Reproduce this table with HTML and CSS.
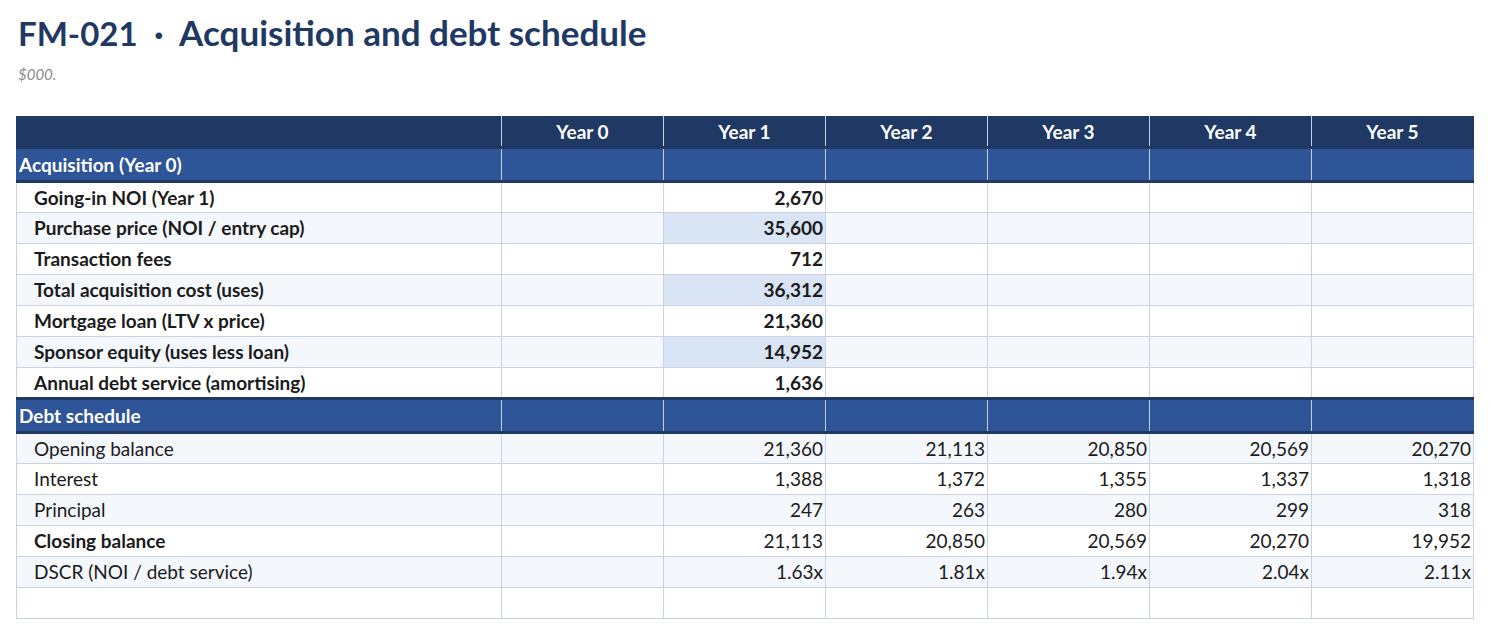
FILE: index.html
```html
<!DOCTYPE html>
<html lang="en">
<head>
<meta charset="utf-8">
<title>FM-021 · Acquisition and debt schedule</title>
<link rel="stylesheet" href="styles.css">
</head>
<body>
<div class="page">
  <h1 class="title"><span class="code">FM-021</span> <span class="dot">·</span> Acquisition and debt schedule</h1>
  <p class="subtitle">$000.</p>
  <table class="sheet">
    <colgroup>
      <col class="c-label">
      <col class="c-year"><col class="c-year"><col class="c-year"><col class="c-year"><col class="c-year"><col class="c-year">
    </colgroup>
    <thead>
      <tr>
        <th></th><th>Year 0</th><th>Year 1</th><th>Year 2</th><th>Year 3</th><th>Year 4</th><th>Year 5</th>
      </tr>
    </thead>
    <tbody>
      <tr class="section"><td>Acquisition (Year 0)</td><td></td><td></td><td></td><td></td><td></td><td></td></tr>
      <tr class="bold"><td>Going-in NOI (Year 1)</td><td></td><td>2,670</td><td></td><td></td><td></td><td></td></tr>
      <tr class="bold alt"><td>Purchase price (NOI / entry cap)</td><td></td><td class="input">35,600</td><td></td><td></td><td></td><td></td></tr>
      <tr class="bold"><td>Transaction fees</td><td></td><td>712</td><td></td><td></td><td></td><td></td></tr>
      <tr class="bold alt"><td>Total acquisition cost (uses)</td><td></td><td class="input">36,312</td><td></td><td></td><td></td><td></td></tr>
      <tr class="bold"><td>Mortgage loan (LTV x price)</td><td></td><td>21,360</td><td></td><td></td><td></td><td></td></tr>
      <tr class="bold alt"><td>Sponsor equity (uses less loan)</td><td></td><td class="input">14,952</td><td></td><td></td><td></td><td></td></tr>
      <tr class="bold"><td>Annual debt service (amortising)</td><td></td><td>1,636</td><td></td><td></td><td></td><td></td></tr>
      <tr class="section"><td>Debt schedule</td><td></td><td></td><td></td><td></td><td></td><td></td></tr>
      <tr class="alt"><td>Opening balance</td><td></td><td>21,360</td><td>21,113</td><td>20,850</td><td>20,569</td><td>20,270</td></tr>
      <tr><td>Interest</td><td></td><td>1,388</td><td>1,372</td><td>1,355</td><td>1,337</td><td>1,318</td></tr>
      <tr class="alt"><td>Principal</td><td></td><td>247</td><td>263</td><td>280</td><td>299</td><td>318</td></tr>
      <tr class="label-bold"><td>Closing balance</td><td></td><td>21,113</td><td>20,850</td><td>20,569</td><td>20,270</td><td>19,952</td></tr>
      <tr class="alt"><td>DSCR (NOI / debt service)</td><td></td><td>1.63x</td><td>1.81x</td><td>1.94x</td><td>2.04x</td><td>2.11x</td></tr>
      <tr><td></td><td></td><td></td><td></td><td></td><td></td><td></td></tr>
    </tbody>
  </table>
</div>
</body>
</html>
```

FILE: styles.css
```css
* { box-sizing: border-box; }

html, body {
  margin: 0;
  padding: 0;
  background: #ffffff;
}

body {
  font-family: Lato, "Liberation Sans", sans-serif;
  color: #1b1b1b;
}

.page {
  padding: 11px 16px 16px 16px;
}

.title {
  margin: 0 0 0 2px;
  font-size: 35px;
  line-height: 42px;
  font-weight: 700;
  color: #1f3864;
}

.title .code {
  font-size: 33px;
}

.title .dot {
  display: inline-block;
  margin: 0 8px;
}

.subtitle {
  margin: 11px 0 0 2px;
  font-size: 15px;
  line-height: 18px;
  font-style: italic;
  color: #8a8a8a;
}

.sheet {
  margin-top: 33px;
  width: 1458px;
  table-layout: fixed;
  border-collapse: collapse;
  font-size: 19px;
}

.c-label { width: 485px; }
.c-year { width: 162px; }

.sheet th,
.sheet td {
  border: 1px solid #c9d3e3;
  height: 31px;
  padding: 0 2px;
  white-space: nowrap;
  text-align: right;
  line-height: 22px;
}

.sheet td:first-child {
  text-align: left;
  padding-left: 17px;
}

.sheet thead th {
  background: #203864;
  color: #ffffff;
  font-weight: 700;
  text-align: center;
  height: 31px;
  border-color: #203864;
  border-left: 1px solid #c3cfe2;
  border-right: 1px solid #c3cfe2;
}

.sheet thead th:first-child {
  border-left-color: #203864;
}

.sheet thead th:last-child {
  border-right-color: #203864;
}

.sheet tr.section td {
  background: #2e5597;
  color: #ffffff;
  font-weight: 700;
  height: 34px;
  border-top: 3px solid #203864;
  border-bottom: 3px solid #203864;
  border-left: 1px solid #c3cfe2;
  border-right: 1px solid #c3cfe2;
}

.sheet tr.section td:first-child {
  padding-left: 2px;
  border-left-color: #2e5597;
}

.sheet tr.section td:last-child {
  border-right-color: #2e5597;
}

.sheet tr.alt td {
  background: #f4f7fc;
}

.sheet tr.bold td {
  font-weight: 700;
}

.sheet tr.label-bold td:first-child {
  font-weight: 700;
}

.sheet tr.alt td.input,
.sheet td.input {
  background: #d9e4f5;
}
```
